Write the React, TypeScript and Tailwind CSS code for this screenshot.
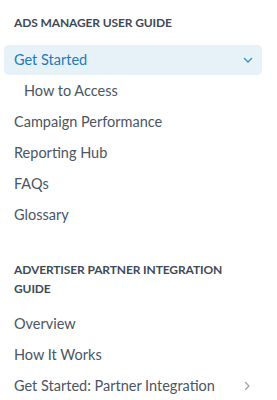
import React from "react";

const Item = ({ label, indent = false }: { label: string; indent?: boolean }) => (
  <div className={`flex h-[31px] items-center ${indent ? "pl-[24px]" : "pl-[14px]"} text-[14.5px] text-[#4b5563]`}>
    {label}
  </div>
);

export default function App() {
  return (
    <div
      className="w-[277px] h-[400px] overflow-hidden bg-white"
      style={{ fontFamily: "Lato, 'Noto Sans', sans-serif" }}
    >
      <div className="pt-[13px] pl-[14px] pr-[30px] text-[12px] font-bold leading-[19px] text-[#3f4a57] tracking-[-0.01em]">
        ADS MANAGER USER GUIDE
      </div>
      <div className="mt-[13px] ml-[4px] mr-[15px] flex h-[30px] items-center justify-between rounded-[5px] bg-[#e6f1f8] pl-[10px] pr-[8px] text-[14.5px] text-[#1f7ab8]">
        <span>Get Started</span>
        <svg width="12" height="12" viewBox="0 0 12 12" fill="none">
          <path d="M2.5 4.5 L6 8 L9.5 4.5" stroke="#3b8fc8" strokeWidth="1.4" strokeLinecap="round" strokeLinejoin="round" />
        </svg>
      </div>
      <Item label="How to Access" indent />
      <Item label="Campaign Performance" />
      <Item label="Reporting Hub" />
      <Item label="FAQs" />
      <Item label="Glossary" />
      <div className="mt-[30px] pl-[14px] pr-[30px] text-[12px] font-bold leading-[19px] text-[#3f4a57] tracking-[-0.01em]">
        ADVERTISER PARTNER INTEGRATION GUIDE
      </div>
      <div className="mt-[10px]">
        <Item label="Overview" />
        <Item label="How It Works" />
        <div className="flex h-[31px] items-center justify-between pl-[14px] pr-[25px] text-[14.5px] text-[#4b5563]">
          <span>Get Started: Partner Integration</span>
          <svg width="10" height="12" viewBox="0 0 10 12" fill="none">
            <path d="M3.5 2.5 L7 6 L3.5 9.5" stroke="#9ca3af" strokeWidth="1.2" strokeLinecap="round" strokeLinejoin="round" />
          </svg>
        </div>
      </div>
    </div>
  );
}
